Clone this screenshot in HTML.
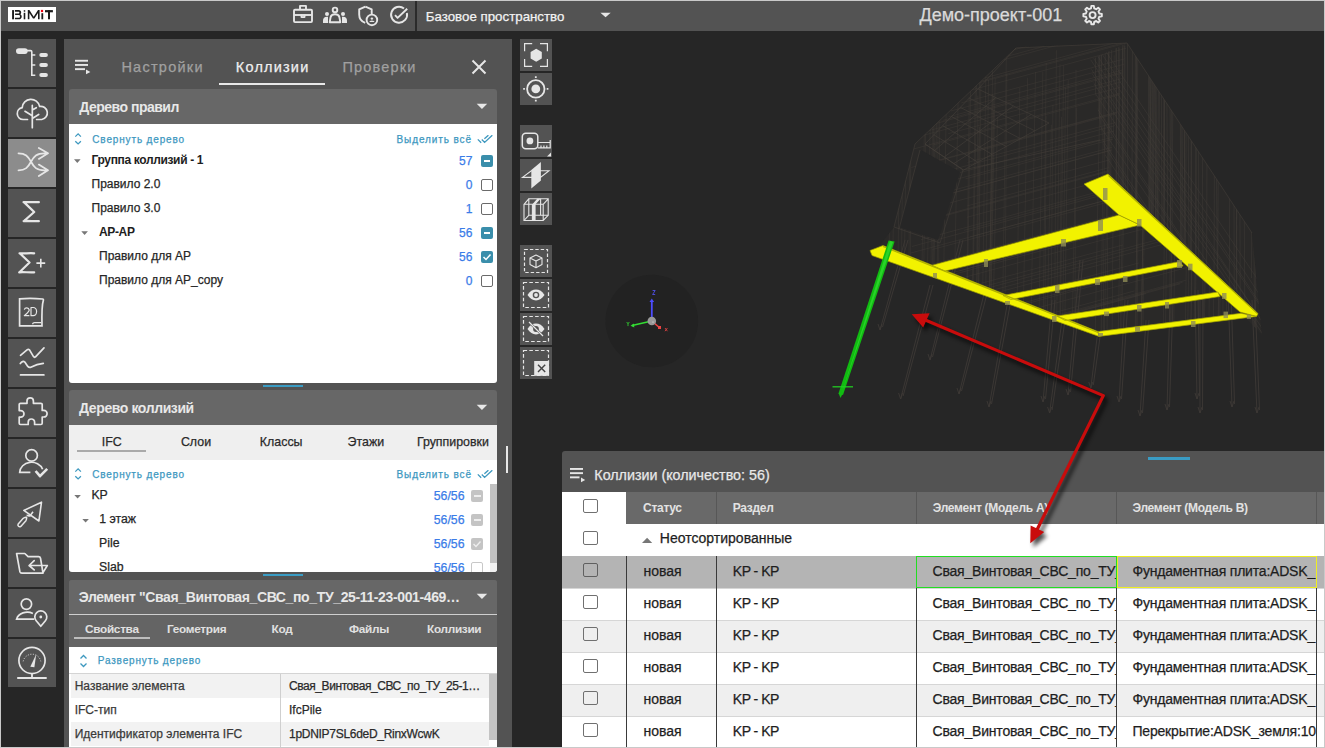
<!DOCTYPE html>
<html><head><meta charset="utf-8">
<style>
*{box-sizing:border-box;margin:0;padding:0}
html,body{width:1325px;height:748px;overflow:hidden;background:#262626;font-family:"Liberation Sans",sans-serif}
body{position:relative}
.a{position:absolute}
.t{position:absolute;white-space:nowrap;line-height:1;-webkit-text-stroke:0.25px currentColor}
.frame{position:absolute;left:0;top:0;width:1325px;height:748px;border:1px solid #c9c9c9;z-index:100;pointer-events:none}
.hdr{left:1px;top:1px;width:1323px;height:30px;background:#535353}
.sb{left:8px;width:48px;height:48px;background:#535353}
.sb.on{background:#8c8c8c}
.sb svg{position:absolute;left:0;top:0}
.panel{left:64px;top:39px;width:448px;height:709px;background:#535353}
.sec{position:absolute;left:69px;width:428px;background:#fff;border-radius:3px;overflow:hidden}
.sech{position:absolute;left:0;top:0;width:100%;height:35px;background:#676767}
.tb{position:absolute;left:520px;width:32px;height:32px;background:#535353}
.cb{position:absolute;width:12px;height:12px;border:1.5px solid #6a6a6a;border-radius:2px;background:#fff}
.cbf{position:absolute;width:12px;height:12px;border-radius:2px;background:#3a8eab}
.num{color:#3a7ce8;font-size:12px}
.blue{color:#3d98bf}
</style></head><body>
<div class="frame"></div>
<!-- HEADER -->
<div class="a hdr"></div>
<svg class="a" style="left:0;top:0" width="1325" height="31" viewBox="0 0 1325 31">
 <rect x="8" y="7" width="48" height="15" fill="#fff"/>
 <g fill="#1c1c1c">
  <rect x="12.1" y="10.1" width="1.9" height="9.2"/>
  <path d="M14.9 10.1h3.9c1.5 0 2.4 1 2.4 2.3c0 0.7-0.3 1.3-0.8 1.8c0.9 0.5 1.3 1.3 1.3 2.2c0 1.6-1.1 2.9-2.8 2.9h-4v-1.6h4c0.7 0 1.1-0.6 1.1-1.3s-0.5-1.3-1.2-1.3h-3.7v-1.6h3.4c0.5 0 0.9-0.4 0.9-1s-0.4-0.8-0.9-0.8h-3.6z"/>
  <rect x="23.7" y="12.8" width="1.6" height="6.5"/>
  <rect x="23.75" y="10.2" width="1.5" height="1.5"/>
  <path d="M27.8 19.3V10.1h1.6l4.3 6.6l4.3-6.6h1.6v9.2h-1.6v-6.4l-3.6 5.6h-1.4l-3.6-5.6v6.4z"/>
  <rect x="41.4" y="13.2" width="1.8" height="6.1"/>
  <rect x="45" y="10.1" width="7.9" height="2.2"/>
  <rect x="48" y="10.1" width="2" height="9.2"/>
 </g>
 <rect x="40.9" y="9.9" width="2.2" height="2.2" fill="#f00010"/>
 <g fill="none" stroke="#e6e6e6" stroke-width="1.9" stroke-linejoin="round">
  <rect x="294" y="9.7" width="18" height="12.4" rx="1"/>
  <path d="M300 9.5V5.9h6v3.6"/>
  <path d="M294 15h18"/>
  <path d="M301.5 14.5v2.6h3v-2.6"/>
  <circle cx="335" cy="9.9" r="2.3"/>
  <path d="M329.7 22.2l0.9-5c0.4-1.9 2-3 4.4-3s4 1.1 4.4 3l0.9 5z"/>
  <path d="M365.4 6.6l-6.2 2.8v5c0 4.2 2.7 7.2 6 8.4"/>
  <path d="M365.4 6.6l6.3 2.8v4.6"/>
  <circle cx="371.9" cy="19.9" r="5.3"/>
  <path d="M404 8.4a8 8 0 1 0 2.9 4.6"/>
  <path d="M395 15.2l2.6 2.7l9.6-9.2"/>
 </g>
 <g fill="#e6e6e6">
  <circle cx="327" cy="13.9" r="2"/><circle cx="343" cy="13.9" r="2"/>
  <path d="M323 23v-2.5c0-2.2 1.4-3.5 3.8-3.7l1.2-0.1v6.3z"/>
  <path d="M347 23v-2.5c0-2.2-1.4-3.5-3.8-3.7l-1.2-0.1v6.3z"/>
  <circle cx="371.9" cy="18.6" r="1.2"/>
  <path d="M369.3 22h5.2a2.6 1.6 0 0 0-5.2 0z"/>
  <path d="M600.4 12.7h10.3l-5.15 4.6z"/>
 </g>
 <rect x="415" y="1" width="2" height="30" fill="#2b2b2b"/>
 <path d="M1091.36 5.88L1093.84 5.88L1094.21 8.39L1096.21 9.22L1098.24 7.71L1099.99 9.46L1098.48 11.49L1099.31 13.49L1101.82 13.86L1101.82 16.34L1099.31 16.71L1098.48 18.71L1099.99 20.74L1098.24 22.49L1096.21 20.98L1094.21 21.81L1093.84 24.32L1091.36 24.32L1090.99 21.81L1088.99 20.98L1086.96 22.49L1085.21 20.74L1086.72 18.71L1085.89 16.71L1083.38 16.34L1083.38 13.86L1085.89 13.49L1086.72 11.49L1085.21 9.46L1086.96 7.71L1088.99 9.22L1090.99 8.39z" fill="none" stroke="#e8e8e8" stroke-width="1.9" stroke-linejoin="round"/><circle cx="1092.6" cy="15.1" r="3" fill="none" stroke="#e8e8e8" stroke-width="1.9"/>
</svg>
<div class="t" style="left:425.8px;top:9.8px;font-size:13.3px;color:#f2f2f2">Базовое пространство</div>
<div class="t" style="left:919.5px;top:5.9px;font-size:18px;color:#dadada">Демо-проект-001</div>
<!-- SIDEBAR -->
<div class="a sb" style="top:39px"><svg width="48" height="48" viewBox="0 0 48 48"><rect x="8" y="9.2" width="11.7" height="5.7" rx="2.85" fill="#e6e6e6"/>
<path d="M19 11.6h3.6a1.2 1.2 0 0 1 1.2 1.2V36.3h3.5M23.8 16h3.5M23.8 26h3.5" stroke="#e6e6e6" stroke-width="1.6" fill="none"/>
<rect x="31.3" y="14" width="8.6" height="4" rx="2" fill="#e6e6e6"/><rect x="31.3" y="24" width="8.6" height="4" rx="2" fill="#e6e6e6"/><rect x="31.3" y="34" width="8.6" height="4" rx="2" fill="#e6e6e6"/></svg></div>
<div class="a sb" style="top:89px"><svg width="48" height="48" viewBox="0 0 48 48"><path d="M19.5 30.5h-4.5a6 6 0 0 1-0.8-11.9a8.8 8.8 0 0 1 17.4-1.2a5.6 5.6 0 0 1 2.2 13.1h-5.2M24.3 16.4v22.3M17 22.3l7.3 4.4M24.3 21l4-2.3M24.3 29.5l6.4-4" stroke="#e6e6e6" stroke-width="1.7" fill="none" stroke-linecap="round"/></svg></div>
<div class="a sb on" style="top:139px"><svg width="48" height="48" viewBox="0 0 48 48"><path d="M10.5 14.3c7 0 9.5 3 12.5 8.5s5.5 8.5 13.5 8.5h3.5M10.5 31.3c7 0 9.5-3 12.5-8.5s5.5-8.5 13.5-8.5h3.5M30.8 9l9.2 5.3l-9.2 5.6M30.8 25.6l9.2 5.7l-9.2 5.7" stroke="#e6e6e6" stroke-width="1.8" fill="none" stroke-linecap="round" stroke-linejoin="round"/></svg></div>
<div class="a sb" style="top:189px"><svg width="48" height="48" viewBox="0 0 48 48"><path d="M15.6 13.1c5 0.3 10 -0.3 15.2 0M16.2 13.3l10 9.7l-10.2 9M15.7 32.1c5 -0.4 10 0.3 15.1 0" stroke="#e6e6e6" stroke-width="2.3" fill="none" stroke-linecap="round" stroke-linejoin="round"/></svg></div>
<div class="a sb" style="top:239px"><svg width="48" height="48" viewBox="0 0 48 48"><path d="M11.5 14.3c4.5 0.3 9.5 -0.3 14.7 0M12 14.5l9.5 9l-9.8 9.5M11.2 33.3c4.5 -0.4 9.8 0.3 15 0" stroke="#e6e6e6" stroke-width="2.2" fill="none" stroke-linecap="round" stroke-linejoin="round"/><path d="M28.4 24.1h8.8M32.8 19.8v8.6" stroke="#e6e6e6" stroke-width="1.6"/></svg></div>
<div class="a sb" style="top:289px"><svg width="48" height="48" viewBox="0 0 48 48"><path d="M11.6 9.8c5-0.5 15-0.7 23 0.2c0.8 0.1 1 0.7 0.7 1.6c-1.3 4-1.6 12-1.3 25.3H11.6z" stroke="#e6e6e6" stroke-width="1.7" fill="none"/><path d="M24.5 35.3c0.3-1 0.8-1.6 2-1.6h6.5" stroke="#e6e6e6" stroke-width="1.3" fill="none"/><path d="M16.3 20.6a2.5 2.4 0 0 1 4.9 0.3c0 1.6-1.4 2.6-4.9 5.8h5.1M23 18.5v8.2h2.2a3.4 4.1 0 0 0 0-8.2z" stroke="#e6e6e6" stroke-width="1.2" fill="none" stroke-linejoin="round"/></svg></div>
<div class="a sb" style="top:339px"><svg width="48" height="48" viewBox="0 0 48 48"><path d="M12.5 16.3l6.5-5.4c1-0.8 1.6-0.8 2.5 0l4 6.7c0.6 0.8 1.3 0.8 2 0.3L36 8.8M12.3 24.6c1.5-2 3-2.8 4.5-1.5l3 4.3c1 1.2 2 1.3 3 0.8c4-2 8-3.3 12.5-3.8M12.5 35.9h23.4" stroke="#e6e6e6" stroke-width="1.7" fill="none" stroke-linecap="round" stroke-linejoin="round"/></svg></div>
<div class="a sb" style="top:389px"><svg width="48" height="48" viewBox="0 0 48 48"><path d="M12.5 14.3h6.5v-2.3a3.2 3.2 0 0 1 6.4 0v2.3h7.5a1.3 1.3 0 0 1 1.3 1.3v5.8h1.6a3.3 3.3 0 0 1 0 6.6h-1.6v6.2a1.3 1.3 0 0 1-1.3 1.3h-6.3v-2.3a3.2 3.2 0 0 0-6.4 0v2.3H12.5a1.3 1.3 0 0 1-1.3-1.3v-6h1.5a3.3 3.3 0 0 0 0-6.6h-1.5v-6a1.3 1.3 0 0 1 1.3-1.3z" stroke="#e6e6e6" stroke-width="1.7" fill="none" stroke-linejoin="round"/></svg></div>
<div class="a sb" style="top:439px"><svg width="48" height="48" viewBox="0 0 48 48"><circle cx="23.6" cy="16.4" r="5.8" stroke="#e6e6e6" stroke-width="1.7" fill="none"/><path d="M34.6 30.2A11.8 10.5 0 0 0 11.7 33.3h10.7" stroke="#e6e6e6" stroke-width="1.7" fill="none"/><path d="M27.6 32l4.4 5.2l7.2-7.3" stroke="#e6e6e6" stroke-width="2.6" fill="none" stroke-linejoin="round"/></svg></div>
<div class="a sb" style="top:489px"><svg width="48" height="48" viewBox="0 0 48 48"><path d="M15.8 21.4l17.7-8.2l-2.6 18.8z M25 22.8l-2.6 3.6c-0.7 0.9-1.3 0.6-1.9 0.3c-0.5-0.3-1.1-0.5-1.9-0.5" stroke="#e6e6e6" stroke-width="1.6" fill="none" stroke-linejoin="round"/><path d="M18.6 28.2c-1.5-0.2-2.8 0.4-3.6 1.3l-4.8 5.5a1.8 1.8 0 0 0 2.6 2.4l5.1-5.6c0.7-0.9 0.9-2.1 0.7-3.6z" stroke="#e6e6e6" stroke-width="1.5" fill="none" stroke-linejoin="round"/></svg></div>
<div class="a sb" style="top:539px"><svg width="48" height="48" viewBox="0 0 48 48"><path d="M8.6 14.5h8.2l3.3 3.1h10.4c1.2 0 1.8 0.7 2 1.6l2.5 14.9H13.8c-1 0-1.6-0.5-1.9-1.4z M34.7 34.1l4.6-7.6h-18.2M26.2 21.6l-5.1 4.9l5.1 4.4" stroke="#e6e6e6" stroke-width="1.7" fill="none" stroke-linejoin="round" stroke-linecap="round"/></svg></div>
<div class="a sb" style="top:589px"><svg width="48" height="48" viewBox="0 0 48 48"><circle cx="18.4" cy="15.1" r="5.2" stroke="#e6e6e6" stroke-width="1.7" fill="none"/><path d="M24.9 24.4A11 9 0 0 0 8.6 30.2h17.6" stroke="#e6e6e6" stroke-width="1.7" fill="none"/><path d="M32.8 37.3l-4.6-5.5a6 6 0 1 1 9.2 0z" stroke="#e6e6e6" stroke-width="1.7" fill="none" stroke-linejoin="round"/><circle cx="32.8" cy="28" r="1.4" fill="#e6e6e6"/></svg></div>
<div class="a sb" style="top:639px"><svg width="48" height="48" viewBox="0 0 48 48"><circle cx="24" cy="21.5" r="13.1" stroke="#e6e6e6" stroke-width="1.7" fill="none"/><path d="M15.2 22.3a9 9 0 0 1 17.6 0" stroke="#e6e6e6" stroke-width="1" stroke-dasharray="1 1.6" fill="none"/><path d="M22.3 27.7l5.9-12.4l-1.8 12.9z" fill="#e6e6e6"/><path d="M24 34.5v4.5M9.2 39h29.5" stroke="#e6e6e6" stroke-width="1.8"/></svg></div>
<!-- 3D -->
<svg class="a" style="left:512px;top:31px" width="813" height="717" viewBox="512 31 813 717">
<defs>
<filter id="sh" x="-20%" y="-20%" width="140%" height="140%"><feGaussianBlur stdDeviation="2.2"/></filter>
<clipPath id="rf"><polygon points="1127,43 1252,233 1262,335 1240,312 1140,225 1108,174 1090,60"/></clipPath>
<clipPath id="md"><polygon points="1017,47 1127,43 1108,174 1256,316 1099,336 872,255 894,227 915,144"/></clipPath>
<clipPath id="cl"><polygon points="1017,47 915,145 966,170 1048,85"/></clipPath>
</defs>
<circle cx="651.8" cy="321" r="46.3" fill="#222222"/>
<path d="M651.8 321V301" stroke="#4d4dff" stroke-width="1.8"/><path d="M649.5 302l2.3-3.5l2.3 3.5z" fill="#4d4dff"/><path d="M651.8 321L632 325.5" stroke="#33dd33" stroke-width="1.6"/><path d="M634 323.5l-3.5 2.3l3.8 1.8z" fill="#33dd33"/><path d="M651.8 321l7 6" stroke="#ee4444" stroke-width="1.5"/><rect x="658" y="326" width="3" height="3" fill="#ee4444"/><circle cx="651.8" cy="321" r="4.3" fill="#999"/><circle cx="653" cy="322" r="0.6" fill="#eee"/><path d="M652.6 290.5h2.6l-2.6 4h2.6" stroke="#5555ff" stroke-width="0.8" fill="none"/><path d="M626.7 322l1.3 1.8l1.3-1.8M628 323.8v2.3" stroke="#33dd33" stroke-width="0.8" fill="none"/><path d="M665 328l2.4 3.2M667.4 328l-2.4 3.2" stroke="#ee4444" stroke-width="0.8" fill="none"/>
<polygon points="1127,43 1252,233 1262,335 1240,312 1140,225 1108,174 1090,60" fill="#2a2928"/>
<polygon points="1017,47 1127,43 1108,174 1256,316 1099,336 872,255 894,227 915,144" fill="#2a2928"/>
<g clip-path="url(#rf)"><path d="M1148.4 41.5L1149.0 265.8M1183.4 43.7L1181.7 300.6M1101.2 44.3L1099.5 267.3M1165.0 48.3L1163.5 277.9M1198.5 49.5L1198.8 291.7M1256.1 40.5L1257.5 283.2M1118.8 41.2L1118.0 325.3M1124.8 45.8L1125.4 289.8M1185.4 40.6L1183.6 276.5M1207.3 44.3L1206.5 306.8M1169.8 43.0L1171.0 315.9M1135.3 45.7L1135.4 330.0M1215.4 42.9L1217.3 269.4M1164.0 47.6L1162.6 299.1M1101.5 46.7L1102.5 305.8M1239.5 43.1L1240.2 307.5M1190.7 44.6L1192.0 335.6M1173.2 46.6L1171.5 316.1M1201.8 49.9L1203.1 282.8M1158.7 46.7L1156.7 296.9M1122.7 41.2L1121.0 321.5M1116.3 42.5L1115.9 329.7M1108.3 44.5L1108.5 330.7M1230.2 48.6L1229.3 293.2M1154.2 48.8L1156.0 272.1M1124.1 42.3L1123.0 298.8M1192.2 42.6L1190.2 293.5M1155.9 45.7L1157.7 315.2M1180.1 46.2L1180.8 264.3M1243.4 47.8L1244.9 323.8M1159.7 44.0L1158.2 310.7M1105.3 40.7L1104.1 273.0M1151.1 40.5L1149.1 272.1M1111.7 43.6L1109.8 329.9M1196.3 41.5L1195.3 287.8M1155.1 41.2L1156.5 339.4M1171.9 44.8L1170.2 268.2M1151.5 42.6L1152.9 272.9M1098.8 49.5L1098.9 271.7M1184.6 40.3L1184.7 338.3M1237.4 47.0L1236.5 289.3M1122.6 47.7L1122.7 322.3M1149.4 42.2L1150.6 338.8M1235.7 48.1L1237.0 319.2M1132.4 45.2L1131.8 262.3M1099.6 42.8L1098.6 315.4M1252.8 44.5L1254.6 339.0M1252.6 43.6L1251.5 278.1M1127.5 42.0L1128.0 332.0M1233.7 44.8L1234.3 324.0M1109.0 46.6L1110.6 322.6M1218.8 44.8L1217.5 323.1M1149.9 48.0L1151.8 291.7M1161.2 49.5L1162.1 273.6M1116.0 41.5L1117.6 324.5M1119.1 48.3L1121.0 312.6M1152.8 45.5L1151.3 261.1M1255.2 46.5L1255.3 334.7M1166.6 48.7L1167.9 276.9M1136.6 42.9L1135.5 306.9M1137.8 44.2L1136.3 332.8M1153.4 44.6L1153.7 332.3M1164.4 49.2L1164.4 302.5M1181.4 40.2L1181.1 274.6M1095.6 48.0L1094.3 297.9M1214.7 45.6L1214.0 301.5M1186.6 47.8L1185.1 304.8M1136.0 42.8L1137.1 300.6M1187.7 47.6L1189.3 295.5M1196.1 45.1L1196.1 315.4M1080 12.7L1270 298.1M1080 20.4L1270 310.7M1080 29.2L1270 318.7M1080 38.2L1270 320.3M1080 43.4L1270 333.7M1080 52.5L1270 333.2M1080 55.7L1270 340.0M1080 62.9L1270 344.8M1080 70.4L1270 357.5M1080 82.2L1270 372.0M1080 85.9L1270 373.5M1080 96.5L1270 377.2M1080 105.3L1270 395.9M1080 108.8L1270 399.2M1080 117.4L1270 402.2M1080 128.4L1270 417.4M1080 131.0L1270 415.1M1080 140.6L1270 423.7M1080 146.2L1270 429.0M1080 156.8L1270 436.1M1080 163.3L1270 447.6M1080 167.6L1270 450.6M1080 178.7L1270 463.9M1080 182.9L1270 473.7M1080 194.7L1270 485.4M1080 198.1L1270 480.3M1080 205.2L1270 493.6M1080 214.1L1270 494.7M1080 222.5L1270 512.5M1080 232.4L1270 514.5M1080 235.9L1270 525.9M1080 245.9L1270 533.3M1080 250.5L1270 530.2M1080 261.6L1270 545.7M1080 265.4L1270 555.7M1080 276.3L1270 564.9M1080 280.5L1270 569.8M1080 287.9L1270 577.3M1080 297.7L1270 580.8M1080 305.8L1270 595.9" stroke="#45403b" stroke-width="1" fill="none" opacity="0.42"/></g>
<g clip-path="url(#md)"><path d="M981.1 60.3L978.2 340M971.1 58.8L966.7 340M907.1 66.1L903.4 340M993.7 110.8L989.9 340M1060.0 64.2L1056.4 340M896.2 70.0L891.2 340M1139.2 94.1L1135.0 340M1051.4 124.8L1046.8 340M1168.4 84.6L1165.4 340M1173.8 81.4L1170.8 340M1123.8 128.6L1120.2 340M1173.0 106.5L1170.5 340M1027.6 77.8L1022.8 340M934.1 55.7L932.1 340M976.9 63.1L972.2 340M1176.0 119.6L1173.7 340M985.9 69.4L982.0 340M1046.2 62.6L1043.0 340M979.5 126.9L978.4 340M1076.0 69.6L1074.9 340M995.2 78.5L990.3 340M1019.8 88.0L1016.8 340M958.3 90.4L953.4 340M979.8 57.2L976.4 340M904.2 51.8L900.4 340M969.2 96.8L966.3 340M1145.2 102.6L1143.0 340M1188.9 81.2L1185.2 340M1224.8 62.0L1222.7 340M1108.7 53.5L1107.0 340M1193.3 100.2L1191.2 340M1166.2 61.1L1163.2 340M1061.5 116.8L1059.7 340M1171.0 96.7L1169.6 340M1122.2 105.5L1118.1 340M900.6 60.6L897.0 340M925.7 116.9L922.9 340M1103.4 100.1L1101.2 340M1056.4 50.3L1054.6 340M1144.4 90.2L1141.6 340M1114.2 55.3L1112.1 340M975.7 56.0L971.8 340M1138.0 66.4L1135.9 340M1221.7 89.5L1218.3 340M1052.9 104.7L1050.9 340M1099.8 101.4L1095.1 340M940.1 70.3L938.1 340M993.5 95.4L988.6 340M910.6 71.5L908.3 340M1125.3 104.1L1121.5 340M1065.6 87.2L1062.5 340M930.3 121.5L926.1 340M1222.6 124.9L1217.6 340M1046.1 115.6L1044.9 340M1042.8 71.5L1038.7 340M1211.5 66.9L1208.8 340M938.2 91.9L937.0 340M935.1 115.6L932.1 340M1191.5 106.3L1187.5 340M1195.2 88.9L1190.3 340M891.2 89.3L888.0 340M992.7 61.3L989.0 340M997.5 117.2L992.5 340M1145.2 117.1L1140.7 340M1205.0 107.0L1203.6 340M988.5 79.8L985.1 340M1229.6 97.1L1226.0 340M1035.5 72.0L1030.7 340M924.6 116.8L920.7 340M1208.1 69.9L1204.2 340M1063.7 65.2L1060.2 340M1215.1 120.7L1213.3 340M1104.5 123.1L1103.3 340M1076.7 107.6L1071.9 340M1139.0 86.1L1137.0 340M1109.1 72.9L1104.3 340M1205.1 60.2L1202.0 340M1006.8 73.8L1004.8 340M1221.9 70.8L1219.6 340M992.3 94.6L988.9 340M946.9 62.9L942.7 340M1198.0 89.8L1193.9 340M1198.1 129.7L1194.9 340M937.5 65.4L932.8 340M1006.3 57.3L1002.2 340M977.8 95.6L976.4 340M1144.9 83.0L1141.5 340M1068.2 80.1L1064.6 340M911.1 72.2L910.0 340M932.8 90.3L930.3 340M923.0 74.3L1141.7 15.3M934.0 76.0L1155.7 16.2M960.9 84.4L1189.8 22.6M911.9 84.5L1176.8 13.0M938.4 93.7L1167.0 32.0M933.5 94.0L1194.1 23.6M961.3 102.9L1197.8 39.1M916.5 104.8L1132.4 46.6M950.9 111.0L1195.3 45.0M948.8 116.8L1181.2 54.1M943.1 120.3L1123.2 71.7M924.0 126.7L1193.6 53.9M928.2 130.8L1130.2 76.3M948.2 133.7L1175.9 72.2M914.2 137.8L1162.0 70.9M933.3 144.9L1137.9 89.7M910.6 149.8L1144.1 86.8M967.5 153.9L1171.6 98.8M938.5 160.8L1138.8 106.7M967.6 162.4L1176.4 106.1M911.3 167.5L1159.9 100.4M935.2 174.2L1140.6 118.7M965.5 178.9L1138.1 132.3M930.3 180.6L1153.6 120.3M921.9 188.6L1183.8 117.9M940.3 193.7L1136.4 140.7M928.7 199.6L1185.6 130.3M923.3 200.8L1180.8 131.2M967.1 205.9L1159.7 153.9M923.4 210.1L1153.4 148.0M966.9 217.3L1131.7 172.8M922.8 220.8L1197.9 146.5M913.1 224.3L1124.8 167.2M963.9 230.4L1190.7 169.1M969.9 236.9L1194.5 176.2M921.1 239.6L1194.9 165.7M911.9 246.5L1173.2 176.0M932.4 249.5L1146.5 191.7M910.2 253.2L1142.4 190.5M967.3 259.0L1129.9 215.1M922.4 266.8L1148.5 205.8M959.3 270.9L1154.6 218.2M938.4 271.8L1149.8 214.8M921.6 281.0L1149.1 219.6M911.8 285.7L1152.9 220.6M956.0 290.1L1123.3 244.9M913.8 291.0L1193.6 215.4M954.8 296.9L1191.9 232.9M926.3 302.1L1196.6 229.1M925.7 308.3L1177.3 240.4M926.5 311.6L1120.3 259.3M965.0 318.6L1170.7 263.0M911.5 324.3L1138.7 263.0M967.4 326.8L1196.3 265.0M925.1 331.1L1154.4 269.2M965.7 336.5L1134.6 290.9M954.3 342.8L1185.8 280.3M946.4 347.5L1146.2 293.5M931.7 350.0L1182.6 282.3M921.8 353.6L1180.2 283.8" stroke="#45403b" stroke-width="1" fill="none" opacity="0.38"/></g>
<polygon points="921,150 960,172 938,240 899,227" fill="#262626"/>
<path d="M925.0 144.0L963.5 170.0M933.8 134.8L977.8 162.2M942.7 125.7L992.0 154.3M951.5 116.5L1006.2 146.5M960.3 107.3L1020.5 138.7M969.2 98.2L1034.8 130.8M978.0 89.0L1049.0 123.0M925.0 144.0L978.0 89.0M934.6 150.5L995.8 97.5M944.2 157.0L1013.5 106.0M953.9 163.5L1031.2 114.5M963.5 170.0L1049.0 123.0" stroke="#45403b" stroke-width="1" fill="none" opacity="0.6"/>
<path d="M1016 48L1127 43L1252 233M1016 48L915 144L894 227L940 243M925 144L963 170L940 243M920 150L899 229M978 89L1016 48M963 170L1100 140" stroke="#45403b" stroke-width="1" fill="none" opacity="0.55"/>
<path d="M930 285L900.6 399M933 285L903.1 396M898.6 393l2 6l2-6M985 290L959 394M988 290L961.5 391M957 388l2 6l2-6M1008 300L989 407M1011 300L991.5 404M987 401l2 6l2-6M1062 320L1049.6 413M1065 320L1052.1 410M1047.6 407l2 6l2-6M1052 300L1043 402M1055 300L1045.5 399M1041 396l2 6l2-6M1098 330L1090.8 388M1101 330L1093.3 385M1088.8 382l2 6l2-6M1125 300L1119 402M1128 300L1121.5 399M1117 396l2 6l2-6M1146 320L1140 416M1149 320L1142.5 413M1138 410l2 6l2-6M1170 300L1167 410M1173 300L1169.5 407M1165 404l2 6l2-6M1200 300L1200 413M1203 300L1202.5 410M1198 407l2 6l2-6M1228 290L1232 407M1231 290L1234.5 404M1230 401l2 6l2-6M1252 300L1257 413M1255 300L1259.5 410M1255 407l2 6l2-6M1195 290L1197 399M1198 290L1199.5 396M1195 393l2 6l2-6M1080 260L1068 395M1083 260L1070.5 392M1066 389l2 6l2-6M905 240L880 330M908 240L882.5 327M878 324l2 6l2-6M960 240L930 360M963 240L932.5 357M928 354l2 6l2-6" stroke="#3d3935" stroke-width="1" fill="none" opacity="0.9"/>
<g stroke="#9c9c00" stroke-width="0.7" stroke-linejoin="round"><polygon points="870,250.5 883,245.5 1098,331.6 1099,336.4 872,255.5" fill="#f2f200"/><polygon points="932,265.3 1119,215 1140,225 945,271" fill="#f2f200"/><polygon points="1084,184 1108,174 1258,314 1256.4,316.4 1240,312 1140,225 1119,215" fill="#f2f200"/><polygon points="1003,295.5 1180,261.5 1183,266 1011,299.5" fill="#f2f200"/><polygon points="1057,316 1218,292 1220,296.5 1065,320.5" fill="#f2f200"/><polygon points="1098,331.6 1241,313.3 1256.4,316.4 1099,336.4" fill="#f2f200"/></g>
<path d="M1108.5 175.5L1258 314M883 246.5L1098 332.5" stroke="#b0b000" stroke-width="1.2" fill="none"/>
<rect x="1103" y="188" width="4.5" height="12" fill="#8f8c55" opacity="0.8"/><rect x="1137" y="219" width="4.5" height="7.5" fill="#8f8c55" opacity="0.8"/><rect x="1098" y="220" width="5" height="11" fill="#8f8c55" opacity="0.8"/><rect x="1061" y="239" width="5" height="7.5" fill="#8f8c55" opacity="0.8"/><rect x="984" y="259" width="4" height="8" fill="#8f8c55" opacity="0.8"/><rect x="933" y="273" width="4" height="5" fill="#8f8c55" opacity="0.8"/><rect x="1188" y="263.7" width="4.5" height="6.5" fill="#8f8c55" opacity="0.8"/><rect x="1177" y="260" width="5" height="8" fill="#8f8c55" opacity="0.8"/><rect x="1123" y="276" width="4.5" height="6" fill="#8f8c55" opacity="0.8"/><rect x="1095" y="279" width="5" height="6" fill="#8f8c55" opacity="0.8"/><rect x="1055" y="285" width="4.5" height="8" fill="#8f8c55" opacity="0.8"/><rect x="1005" y="301" width="5" height="4" fill="#8f8c55" opacity="0.8"/><rect x="1222" y="293" width="4.5" height="6" fill="#8f8c55" opacity="0.8"/><rect x="1165" y="302" width="4" height="6.5" fill="#8f8c55" opacity="0.8"/><rect x="1137" y="305" width="4.5" height="6.5" fill="#8f8c55" opacity="0.8"/><rect x="1104" y="311.6" width="5" height="4.5" fill="#8f8c55" opacity="0.8"/><rect x="1052" y="316" width="4.5" height="6" fill="#8f8c55" opacity="0.8"/><rect x="1191" y="321" width="4.5" height="6" fill="#8f8c55" opacity="0.8"/><rect x="1135" y="327" width="5" height="4.7" fill="#8f8c55" opacity="0.8"/><rect x="1098" y="333" width="5" height="3" fill="#8f8c55" opacity="0.8"/><rect x="1223.5" y="311.6" width="4.5" height="6.5" fill="#8f8c55" opacity="0.8"/><rect x="1246.8" y="314.7" width="4.2" height="4.3" fill="#8f8c55" opacity="0.8"/>
<path d="M888.6 240.5L894.6 241.6L843 395L838.5 393.5z" fill="#11bb11"/><path d="M890 241L893 242L841.5 394z" fill="#33dd33" opacity="0.7"/><path d="M832.5 386.8h20.5" stroke="#22cc22" stroke-width="1.3"/><path d="M838.5 393l2 5l2.5-5" fill="#11bb11"/>
</svg>
<!-- VIEW -->
<div class="tb" style="top:39px"><svg width="32" height="32" viewBox="0 0 32 32"><path d="M4.6 12.2V4.6h7.6M20 4.6h7.4v7.6M27.4 20v7.4H20M12.2 27.4H4.6V20" stroke="#e6e6e6" stroke-width="1.2" fill="none"/><path d="M16.2 9.8l5.6 3.2v6.5l-5.6 3.2l-5.6-3.2v-6.5z" fill="#e6e6e6"/></svg></div>
<div class="tb" style="top:73px"><svg width="32" height="32" viewBox="0 0 32 32"><circle cx="15.8" cy="15.9" r="8.7" stroke="#e6e6e6" stroke-width="1.8" fill="none"/><circle cx="15.8" cy="15.9" r="4.4" fill="#e6e6e6"/><path d="M15.8 5v-1.7M15.8 26.8v1.7M4.9 15.9H3.2M26.7 15.9h1.7" stroke="#e6e6e6" stroke-width="1.8"/></svg></div>
<div class="tb" style="top:125px"><svg width="32" height="32" viewBox="0 0 32 32"><rect x="2.3" y="8.3" width="15.5" height="15.5" rx="3.5" stroke="#e6e6e6" stroke-width="1.5" fill="none"/><circle cx="9.9" cy="15.9" r="3.4" fill="#e6e6e6"/><path d="M17.8 17.5h12.4v5.4H17.8M21 22.9v-2.5M23.9 22.9v-2.5M26.8 22.9v-2.5M30.2 17.5v-2.5" stroke="#e6e6e6" stroke-width="1.2" fill="none"/><path d="M31 27.5v4h-4z" fill="#e6e6e6"/></svg></div>
<div class="tb" style="top:159px"><svg width="32" height="32" viewBox="0 0 32 32"><path d="M2.5 18.4l8.8-6.7h17.7l-8.6 6.7z" stroke="#e6e6e6" stroke-width="1.1" fill="none"/><path d="M11.3 11l9.6-8.1v18.7l-9.6 7.9z" fill="#e6e6e6"/></svg></div>
<div class="tb" style="top:193px"><svg width="32" height="32" viewBox="0 0 32 32"><path d="M4 11.3l4.8-5.5h19.4v16.5l-5 5.2H4z M4 11.3h19.2v16.2M23.2 11.3l5-5.5" stroke="#e6e6e6" stroke-width="1.1" fill="none"/><path d="M12.4 11.3l4.8-5.5h3.4l-5 5.5v16.2h-3.2z" fill="#e6e6e6"/><path d="M4 27.5l4.8-5.2h19.4M8.8 5.8v16.5M12.4 11.3v16.2M20.6 5.8v16.5" stroke="#e6e6e6" stroke-width="1.1" fill="none"/></svg></div>
<div class="tb" style="top:245px"><svg width="32" height="32" viewBox="0 0 32 32"><rect x="4.5" y="4.5" width="23" height="23" stroke="#e6e6e6" stroke-width="1.2" stroke-dasharray="3.4 2" fill="none"/><path d="M16 10l6 3v6.6l-6 3.2l-6-3.2V13z M10 13l6 3l6-3M16 16v6.8" stroke="#e6e6e6" stroke-width="1.1" fill="none" stroke-linejoin="round"/></svg></div>
<div class="tb" style="top:279px"><svg width="32" height="32" viewBox="0 0 32 32"><rect x="3.5" y="3.5" width="25" height="25" stroke="#e6e6e6" stroke-width="1.2" stroke-dasharray="3.6 2.2" fill="none"/><path d="M7.5 16c2.3-3.6 5.2-5.4 8.5-5.4s6.2 1.8 8.5 5.4c-2.3 3.6-5.2 5.4-8.5 5.4s-6.2-1.8-8.5-5.4z" fill="#e6e6e6"/><circle cx="16" cy="16" r="3.3" fill="#535353"/><circle cx="16" cy="16" r="1.9" fill="#e6e6e6"/></svg></div>
<div class="tb" style="top:313px"><svg width="32" height="32" viewBox="0 0 32 32"><rect x="3.5" y="3.5" width="25" height="25" stroke="#e6e6e6" stroke-width="1.2" stroke-dasharray="3.6 2.2" fill="none"/><path d="M7.5 16c2.3-3.6 5.2-5.4 8.5-5.4s6.2 1.8 8.5 5.4c-2.3 3.6-5.2 5.4-8.5 5.4s-6.2-1.8-8.5-5.4z" fill="#e6e6e6"/><circle cx="16" cy="16" r="2.9" fill="#535353"/><path d="M9 9l14 14" stroke="#535353" stroke-width="2.4"/><path d="M9 9l14 14" stroke="#e6e6e6" stroke-width="1.2"/></svg></div>
<div class="tb" style="top:347px"><svg width="32" height="32" viewBox="0 0 32 32"><rect x="3.5" y="3.5" width="25" height="25" stroke="#e6e6e6" stroke-width="1.2" stroke-dasharray="3.6 2.2" fill="none"/><rect x="14.2" y="14" width="14.8" height="14.8" fill="#e6e6e6"/><path d="M18 17.8l7.2 7.2M25.2 17.8l-7.2 7.2" stroke="#444" stroke-width="1.4"/></svg></div>
<!-- TABLE -->
<div class="a" style="left:562px;top:451px;width:763px;height:297px;background:#535353;border-radius:3px 0 0 0"></div>
<svg class="a" style="left:568px;top:466px" width="20" height="18"><g fill="#e6e6e6"><rect x="2" y="2" width="13" height="1.9"/><rect x="2" y="6.2" width="13" height="1.9"/><rect x="2" y="10.4" width="9.5" height="1.9"/><path d="M13 11.6l4.2 2.3l-4.2 2.3z"/></g></svg>
<div class="t" style="left:594.3px;top:467.50px;font-size:14.3px;color:#e8e8e8;">Коллизии (количество: 56)</div>
<div class="a" style="left:1148px;top:457px;width:42px;height:3px;background:#3a9cc4"></div>
<div class="a" style="left:562px;top:492px;width:64px;height:32px;background:#fff"></div>
<div class="a" style="left:626px;top:492px;width:698px;height:32px;background:#696969"></div>
<div class="a" style="left:716px;top:492px;width:1px;height:32px;background:#575757"></div>
<div class="a" style="left:916px;top:492px;width:1px;height:32px;background:#575757"></div>
<div class="a" style="left:1116px;top:492px;width:1px;height:32px;background:#575757"></div>
<div class="a" style="left:1316px;top:492px;width:1px;height:32px;background:#575757"></div>
<div class="t" style="left:643.1px;top:502.14px;font-size:12px;color:#e2e2e2;font-weight:700;-webkit-text-stroke:0;letter-spacing:-0.3px;">Статус</div>
<div class="t" style="left:732.8px;top:502.14px;font-size:12px;color:#e2e2e2;font-weight:700;-webkit-text-stroke:0;letter-spacing:-0.3px;">Раздел</div>
<div class="t" style="left:932.7px;top:502.14px;font-size:12px;color:#e2e2e2;font-weight:700;-webkit-text-stroke:0;letter-spacing:-0.3px;">Элемент (Модель A)</div>
<div class="t" style="left:1132.5px;top:502.14px;font-size:12px;color:#e2e2e2;font-weight:700;-webkit-text-stroke:0;letter-spacing:-0.3px;">Элемент (Модель B)</div>
<div class="a" style="left:583px;top:498.8px;width:14.5px;height:14.5px;border:1.6px solid #707070;border-radius:2px"></div>
<div class="a" style="left:562px;top:524px;width:762px;height:32px;background:#fff"></div>
<div class="a" style="left:583px;top:530.6px;width:14.5px;height:14.5px;border:1.6px solid #707070;border-radius:2px"></div>
<svg class="a" style="left:641px;top:537px" width="13" height="7"><path d="M1 6h10.2l-5.1-5.2z" fill="#777"/></svg>
<div class="t" style="left:659.8px;top:530.95px;font-size:14px;color:#1e1e1e;">Неотсортированные</div>
<div class="a" style="left:562px;top:556px;width:762px;height:32px;background:#b4b4b4"></div>
<div class="a" style="left:626px;top:556px;width:1px;height:32px;background:#3a3a3a"></div>
<div class="a" style="left:716px;top:556px;width:1px;height:32px;background:#3a3a3a"></div>
<div class="a" style="left:916px;top:556px;width:1px;height:32px;background:#3a3a3a"></div>
<div class="a" style="left:1116px;top:556px;width:1px;height:32px;background:#3a3a3a"></div>
<div class="a" style="left:1316px;top:556px;width:1px;height:32px;background:#3a3a3a"></div>
<div class="a" style="left:583px;top:562.6px;width:14.5px;height:14.5px;border:1.6px solid #606060;border-radius:2px"></div>
<div class="t" style="left:643.5px;top:563.85px;font-size:14px;color:#1e1e1e;">новая</div>
<div class="t" style="left:732.8px;top:563.85px;font-size:14px;color:#1e1e1e;letter-spacing:-0.5px;">KP - KP</div>
<div class="a" style="left:917px;top:556px;width:199px;height:32px;overflow:hidden"><div class="t" style="left:15.5px;top:7.85px;font-size:14px;color:#1e1e1e;letter-spacing:-0.2px;">Свая_Винтовая_СВС_по_ТУ_</div>
</div>
<div class="a" style="left:1117px;top:556px;width:199px;height:32px;overflow:hidden"><div class="t" style="left:15.5px;top:7.85px;font-size:14px;color:#1e1e1e;letter-spacing:-0.2px;">Фундаментная плита:ADSK_</div>
</div>
<div class="a" style="left:562px;top:588px;width:762px;height:32px;background:#fff"></div>
<div class="a" style="left:562px;top:587.5px;width:762px;height:1px;background:#d6d6d6"></div>
<div class="a" style="left:626px;top:588px;width:1px;height:32px;background:#3a3a3a"></div>
<div class="a" style="left:716px;top:588px;width:1px;height:32px;background:#3a3a3a"></div>
<div class="a" style="left:916px;top:588px;width:1px;height:32px;background:#3a3a3a"></div>
<div class="a" style="left:1116px;top:588px;width:1px;height:32px;background:#3a3a3a"></div>
<div class="a" style="left:1316px;top:588px;width:1px;height:32px;background:#3a3a3a"></div>
<div class="a" style="left:583px;top:594.6px;width:14.5px;height:14.5px;border:1.6px solid #707070;border-radius:2px"></div>
<div class="t" style="left:643.5px;top:595.85px;font-size:14px;color:#1e1e1e;">новая</div>
<div class="t" style="left:732.8px;top:595.85px;font-size:14px;color:#1e1e1e;letter-spacing:-0.5px;">KP - KP</div>
<div class="a" style="left:917px;top:588px;width:199px;height:32px;overflow:hidden"><div class="t" style="left:15.5px;top:7.85px;font-size:14px;color:#1e1e1e;letter-spacing:-0.2px;">Свая_Винтовая_СВС_по_ТУ_</div>
</div>
<div class="a" style="left:1117px;top:588px;width:199px;height:32px;overflow:hidden"><div class="t" style="left:15.5px;top:7.85px;font-size:14px;color:#1e1e1e;letter-spacing:-0.2px;">Фундаментная плита:ADSK_</div>
</div>
<div class="a" style="left:562px;top:620px;width:762px;height:32px;background:#efefef"></div>
<div class="a" style="left:562px;top:619.5px;width:762px;height:1px;background:#d6d6d6"></div>
<div class="a" style="left:626px;top:620px;width:1px;height:32px;background:#3a3a3a"></div>
<div class="a" style="left:716px;top:620px;width:1px;height:32px;background:#3a3a3a"></div>
<div class="a" style="left:916px;top:620px;width:1px;height:32px;background:#3a3a3a"></div>
<div class="a" style="left:1116px;top:620px;width:1px;height:32px;background:#3a3a3a"></div>
<div class="a" style="left:1316px;top:620px;width:1px;height:32px;background:#3a3a3a"></div>
<div class="a" style="left:583px;top:626.6px;width:14.5px;height:14.5px;border:1.6px solid #707070;border-radius:2px"></div>
<div class="t" style="left:643.5px;top:627.85px;font-size:14px;color:#1e1e1e;">новая</div>
<div class="t" style="left:732.8px;top:627.85px;font-size:14px;color:#1e1e1e;letter-spacing:-0.5px;">KP - KP</div>
<div class="a" style="left:917px;top:620px;width:199px;height:32px;overflow:hidden"><div class="t" style="left:15.5px;top:7.85px;font-size:14px;color:#1e1e1e;letter-spacing:-0.2px;">Свая_Винтовая_СВС_по_ТУ_</div>
</div>
<div class="a" style="left:1117px;top:620px;width:199px;height:32px;overflow:hidden"><div class="t" style="left:15.5px;top:7.85px;font-size:14px;color:#1e1e1e;letter-spacing:-0.2px;">Фундаментная плита:ADSK_</div>
</div>
<div class="a" style="left:562px;top:652px;width:762px;height:32px;background:#fff"></div>
<div class="a" style="left:562px;top:651.5px;width:762px;height:1px;background:#d6d6d6"></div>
<div class="a" style="left:626px;top:652px;width:1px;height:32px;background:#3a3a3a"></div>
<div class="a" style="left:716px;top:652px;width:1px;height:32px;background:#3a3a3a"></div>
<div class="a" style="left:916px;top:652px;width:1px;height:32px;background:#3a3a3a"></div>
<div class="a" style="left:1116px;top:652px;width:1px;height:32px;background:#3a3a3a"></div>
<div class="a" style="left:1316px;top:652px;width:1px;height:32px;background:#3a3a3a"></div>
<div class="a" style="left:583px;top:658.6px;width:14.5px;height:14.5px;border:1.6px solid #707070;border-radius:2px"></div>
<div class="t" style="left:643.5px;top:659.85px;font-size:14px;color:#1e1e1e;">новая</div>
<div class="t" style="left:732.8px;top:659.85px;font-size:14px;color:#1e1e1e;letter-spacing:-0.5px;">KP - KP</div>
<div class="a" style="left:917px;top:652px;width:199px;height:32px;overflow:hidden"><div class="t" style="left:15.5px;top:7.85px;font-size:14px;color:#1e1e1e;letter-spacing:-0.2px;">Свая_Винтовая_СВС_по_ТУ_</div>
</div>
<div class="a" style="left:1117px;top:652px;width:199px;height:32px;overflow:hidden"><div class="t" style="left:15.5px;top:7.85px;font-size:14px;color:#1e1e1e;letter-spacing:-0.2px;">Фундаментная плита:ADSK_</div>
</div>
<div class="a" style="left:562px;top:684px;width:762px;height:32px;background:#efefef"></div>
<div class="a" style="left:562px;top:683.5px;width:762px;height:1px;background:#d6d6d6"></div>
<div class="a" style="left:626px;top:684px;width:1px;height:32px;background:#3a3a3a"></div>
<div class="a" style="left:716px;top:684px;width:1px;height:32px;background:#3a3a3a"></div>
<div class="a" style="left:916px;top:684px;width:1px;height:32px;background:#3a3a3a"></div>
<div class="a" style="left:1116px;top:684px;width:1px;height:32px;background:#3a3a3a"></div>
<div class="a" style="left:1316px;top:684px;width:1px;height:32px;background:#3a3a3a"></div>
<div class="a" style="left:583px;top:690.6px;width:14.5px;height:14.5px;border:1.6px solid #707070;border-radius:2px"></div>
<div class="t" style="left:643.5px;top:691.85px;font-size:14px;color:#1e1e1e;">новая</div>
<div class="t" style="left:732.8px;top:691.85px;font-size:14px;color:#1e1e1e;letter-spacing:-0.5px;">KP - KP</div>
<div class="a" style="left:917px;top:684px;width:199px;height:32px;overflow:hidden"><div class="t" style="left:15.5px;top:7.85px;font-size:14px;color:#1e1e1e;letter-spacing:-0.2px;">Свая_Винтовая_СВС_по_ТУ_</div>
</div>
<div class="a" style="left:1117px;top:684px;width:199px;height:32px;overflow:hidden"><div class="t" style="left:15.5px;top:7.85px;font-size:14px;color:#1e1e1e;letter-spacing:-0.2px;">Фундаментная плита:ADSK_</div>
</div>
<div class="a" style="left:562px;top:716px;width:762px;height:31px;background:#fff"></div>
<div class="a" style="left:562px;top:715.5px;width:762px;height:1px;background:#d6d6d6"></div>
<div class="a" style="left:626px;top:716px;width:1px;height:31px;background:#3a3a3a"></div>
<div class="a" style="left:716px;top:716px;width:1px;height:31px;background:#3a3a3a"></div>
<div class="a" style="left:916px;top:716px;width:1px;height:31px;background:#3a3a3a"></div>
<div class="a" style="left:1116px;top:716px;width:1px;height:31px;background:#3a3a3a"></div>
<div class="a" style="left:1316px;top:716px;width:1px;height:31px;background:#3a3a3a"></div>
<div class="a" style="left:583px;top:722.6px;width:14.5px;height:14.5px;border:1.6px solid #707070;border-radius:2px"></div>
<div class="t" style="left:643.5px;top:723.85px;font-size:14px;color:#1e1e1e;">новая</div>
<div class="t" style="left:732.8px;top:723.85px;font-size:14px;color:#1e1e1e;letter-spacing:-0.5px;">KP - KP</div>
<div class="a" style="left:917px;top:716px;width:199px;height:31px;overflow:hidden"><div class="t" style="left:15.5px;top:7.85px;font-size:14px;color:#1e1e1e;letter-spacing:-0.2px;">Свая_Винтовая_СВС_по_ТУ_</div>
</div>
<div class="a" style="left:1117px;top:716px;width:199px;height:31px;overflow:hidden"><div class="t" style="left:15.5px;top:7.85px;font-size:14px;color:#1e1e1e;letter-spacing:-0.2px;">Перекрытие:ADSK_земля:10</div>
</div>
<div class="a" style="left:916px;top:556px;width:201px;height:32px;border:1.5px solid #22dd22"></div>
<div class="a" style="left:1117px;top:556px;width:200px;height:32px;border:1.5px solid #eeee22"></div>
<!-- /TABLE -->
<!-- ARROW --><svg class="a" style="left:512px;top:31px;z-index:5" width="813" height="717" viewBox="512 31 813 717"><g filter="url(#sh2)" opacity="0.7" transform="translate(3 4)"><path d="M1103.3 395.6L926.5 320.5M1103.3 395.6L1037.4 529" stroke="#000" stroke-width="3.5" fill="none"/><path d="M911.7 314.2L929.6 313.3L923.2 327.5z M1030.3 543.3L1044.2 532.1L1030.6 525.6z" fill="#000"/></g><defs><filter id="sh2" x="-20%" y="-20%" width="140%" height="140%"><feGaussianBlur stdDeviation="2.2"/></filter></defs><path d="M1103.3 395.6L926.5 320.5M1103.3 395.6L1037.4 529" stroke="#c80c0c" stroke-width="3.2" fill="none" stroke-linecap="round"/><path d="M911.7 314.2L929.6 313.3L923.2 327.5z M1030.3 543.3L1044.2 532.1L1030.6 525.6z" fill="#c80c0c"/></svg>
<!-- PANEL -->
<div class="a panel"></div>
<svg class="a" style="left:64px;top:39px" width="448" height="60" viewBox="64 39 448 60">
<g fill="#e6e6e6"><rect x="75" y="59.8" width="13" height="1.9"/><rect x="75" y="64" width="13" height="1.9"/><rect x="75" y="68.2" width="10" height="1.9"/><path d="M86 69.5l4.4 2.4l-4.4 2.4z"/></g>
<rect x="219" y="83" width="106" height="2" fill="#e8e8e8"/>
<path d="M472.5 60.5l13 13M485.5 60.5l-13 13" stroke="#e6e6e6" stroke-width="2"/>
</svg>
<div class="t" style="left:121.4px;top:59.93px;font-size:14.5px;color:#a0a0a0;letter-spacing:1.25px;">Настройки</div>
<div class="t" style="left:235.8px;top:59.93px;font-size:14.5px;color:#efefef;letter-spacing:1.2px;">Коллизии</div>
<div class="t" style="left:342.4px;top:59.93px;font-size:14.5px;color:#a0a0a0;letter-spacing:1.2px;">Проверки</div>
<div class="sec" style="top:89px;height:294px;background:#676767"><div class="a" style="left:0;top:35px;width:428px;height:259px;background:#fff"></div></div>
<div class="t" style="left:79.3px;top:100.15px;font-size:14px;color:#e8e8e8;font-weight:700;-webkit-text-stroke:0;letter-spacing:-0.5px;">Дерево правил</div>
<svg class="a" style="left:476px;top:103px" width="12" height="7"><path d="M0.7 0.8h10.5l-5.25 5.2z" fill="#e8e8e8"/></svg>
<svg class="a" style="left:74px;top:133px" width="9" height="13"><path d="M1.3 3.6L4.1 0.9L6.9 3.6M1.3 8.2L4.1 10.9L6.9 8.2" stroke="#3d98bf" stroke-width="1.3" fill="none"/></svg>
<svg class="a" style="left:477px;top:135px" width="17" height="10" style="overflow:visible"><path d="M0.8 4.4l3.4 3.4M7.4 3.8l4-3.6M4.8 4.5l2.8 2.9l7.7-7.2" stroke="#3d98bf" stroke-width="1.3" fill="none"/></svg>
<div class="t" style="left:92.3px;top:134.53px;font-size:10px;color:#3d98bf;letter-spacing:0.85px;">Свернуть дерево</div>
<div class="t" style="left:396.5px;top:134.53px;font-size:10px;color:#3d98bf;letter-spacing:0.9px;">Выделить всё</div>
<div class="t" style="left:91.5px;top:153.84px;font-size:12px;color:#1e1e1e;font-weight:700;-webkit-text-stroke:0;letter-spacing:-0.35px;">Группа коллизий - 1</div>
<div class="t" style="right:852.7px;top:154.84px;font-size:12px;color:#3a7ce8;">57</div>
<div class="cbf" style="left:481px;top:155px"><div class="a" style="left:3px;top:5px;width:6px;height:2px;background:#fff"></div></div>
<div class="t" style="left:91.5px;top:177.84px;font-size:12px;color:#262626;">Правило 2.0</div>
<div class="t" style="right:852.7px;top:178.84px;font-size:12px;color:#3a7ce8;">0</div>
<div class="cb" style="left:481px;top:179px"></div>
<div class="t" style="left:91.5px;top:201.84px;font-size:12px;color:#262626;">Правило 3.0</div>
<div class="t" style="right:852.7px;top:202.84px;font-size:12px;color:#3a7ce8;">1</div>
<div class="cb" style="left:481px;top:203px"></div>
<div class="t" style="left:99px;top:225.84px;font-size:12px;color:#1e1e1e;font-weight:700;-webkit-text-stroke:0;letter-spacing:-0.35px;">AP-AP</div>
<div class="t" style="right:852.7px;top:226.84px;font-size:12px;color:#3a7ce8;">56</div>
<div class="cbf" style="left:481px;top:227px"><div class="a" style="left:3px;top:5px;width:6px;height:2px;background:#fff"></div></div>
<div class="t" style="left:99px;top:249.84px;font-size:12px;color:#262626;">Правило для AP</div>
<div class="t" style="right:852.7px;top:250.84px;font-size:12px;color:#3a7ce8;">56</div>
<div class="cbf" style="left:481px;top:251px"><svg class="a" style="left:0;top:0" width="12" height="12"><path d="M2.5 6l2.5 2.5l4.5-5" stroke="#fff" stroke-width="1.5" fill="none"/></svg></div>
<div class="t" style="left:99px;top:273.84px;font-size:12px;color:#262626;">Правило для AP_copy</div>
<div class="t" style="right:852.7px;top:274.84px;font-size:12px;color:#3a7ce8;">0</div>
<div class="cb" style="left:481px;top:275px"></div>
<svg class="a" style="left:0;top:0" width="100" height="240"><path d="M74 159.3h6.6l-3.3 3.6z M81.3 231.3h6.6l-3.3 3.6z" fill="#777"/></svg>
<div class="a" style="left:263px;top:385px;width:40px;height:2px;background:#3a9cc4"></div>
<div class="sec" style="top:390px;height:181.5px;background:#676767"><div class="a" style="left:0;top:70px;width:428px;height:112px;background:#fff"></div><div class="a" style="left:0;top:35px;width:428px;height:35px;background:#efefef"></div><div class="a" style="left:421px;top:94px;width:7px;height:87.5px;background:#f1f1f1"></div><div class="a" style="left:421px;top:94px;width:7px;height:79px;background:#c1c1c1"></div></div>
<div class="t" style="left:79.1px;top:400.55px;font-size:14px;color:#e8e8e8;font-weight:700;-webkit-text-stroke:0;letter-spacing:-0.4px;">Дерево коллизий</div>
<svg class="a" style="left:476px;top:404px" width="12" height="7"><path d="M0.7 0.8h10.5l-5.25 5.2z" fill="#e8e8e8"/></svg>
<div class="a" style="left:77px;top:450px;width:69px;height:2px;background:#aaaaaa"></div>
<div class="t" style="left:11.700000000000003px;width:200px;text-align:center;top:435.80px;font-size:12.4px;color:#2a2a2a;">IFC</div>
<div class="t" style="left:96px;width:200px;text-align:center;top:435.80px;font-size:12.4px;color:#2a2a2a;">Слои</div>
<div class="t" style="left:181.2px;width:200px;text-align:center;top:435.80px;font-size:12.4px;color:#2a2a2a;">Классы</div>
<div class="t" style="left:265.9px;width:200px;text-align:center;top:435.80px;font-size:12.4px;color:#2a2a2a;">Этажи</div>
<div class="t" style="left:352.9px;width:200px;text-align:center;top:435.80px;font-size:12.4px;color:#2a2a2a;">Группировки</div>
<svg class="a" style="left:74px;top:468px" width="9" height="13"><path d="M1.3 3.6L4.1 0.9L6.9 3.6M1.3 8.2L4.1 10.9L6.9 8.2" stroke="#3d98bf" stroke-width="1.3" fill="none"/></svg>
<svg class="a" style="left:477px;top:470px" width="17" height="10" style="overflow:visible"><path d="M0.8 4.4l3.4 3.4M7.4 3.8l4-3.6M4.8 4.5l2.8 2.9l7.7-7.2" stroke="#3d98bf" stroke-width="1.3" fill="none"/></svg>
<div class="t" style="left:92.2px;top:469.64px;font-size:10px;color:#3d98bf;letter-spacing:0.85px;">Свернуть дерево</div>
<div class="t" style="left:396.5px;top:469.64px;font-size:10px;color:#3d98bf;letter-spacing:0.9px;">Выделить всё</div>
<div class="a" style="left:69px;top:460px;width:421px;height:111.5px;overflow:hidden">
<div class="t" style="left:22.400000000000006px;top:29.29px;font-size:12.3px;color:#262626;">KP</div>
<div class="t" style="right:25.5px;top:30.29px;font-size:12.3px;color:#3a7ce8;">56/56</div>
<div class="a" style="left:402px;top:30px;width:12px;height:12px;border-radius:2px;background:#c4c4c4"><div class="a" style="left:2.5px;top:5px;width:7px;height:2px;background:#eee"></div></div>
<div class="t" style="left:30.200000000000003px;top:53.29px;font-size:12.3px;color:#262626;">1 этаж</div>
<div class="t" style="right:25.5px;top:54.29px;font-size:12.3px;color:#3a7ce8;">56/56</div>
<div class="a" style="left:402px;top:54px;width:12px;height:12px;border-radius:2px;background:#c4c4c4"><div class="a" style="left:2.5px;top:5px;width:7px;height:2px;background:#eee"></div></div>
<div class="t" style="left:30px;top:77.29px;font-size:12.3px;color:#262626;">Pile</div>
<div class="t" style="right:25.5px;top:78.29px;font-size:12.3px;color:#3a7ce8;">56/56</div>
<div class="a" style="left:402px;top:78px;width:12px;height:12px;border-radius:2px;background:#c4c4c4"><svg class="a" style="left:0;top:0" width="12" height="12"><path d="M2.5 6l2.5 2.5l4.5-5" stroke="#eee" stroke-width="1.4" fill="none"/></svg></div>
<div class="t" style="left:30px;top:101.29px;font-size:12.3px;color:#262626;">Slab</div>
<div class="t" style="right:25.5px;top:102.29px;font-size:12.3px;color:#3a7ce8;">56/56</div>
<div class="cb" style="left:402px;top:102px;border-color:#c8c8c8"></div>
<svg class="a" style="left:0;top:0" width="30" height="90"><path d="M5.3 35h6.6l-3.3 3.6z M13.3 59h6.6l-3.3 3.6z" fill="#777"/></svg>
</div>
<div class="a" style="left:506px;top:446px;width:1.5px;height:27px;background:#e8e8e8"></div>
<div class="a" style="left:263px;top:574.3px;width:40px;height:2px;background:#3a9cc4"></div>
<div class="sec" style="top:579.5px;height:169px;border-radius:3px 3px 0 0;background:#676767"><div class="a" style="left:0;top:67px;width:428px;height:102px;background:#fff"></div><div class="a" style="left:0;top:0;width:428px;height:34.5px;background:#676767"></div><div class="a" style="left:0;top:34.5px;width:428px;height:1px;background:#cfcfcf"></div><div class="a" style="left:0;top:35.5px;width:428px;height:31.5px;background:#646464"></div></div>
<div class="t" style="left:78.7px;top:589.55px;font-size:14px;color:#e8e8e8;font-weight:700;-webkit-text-stroke:0;letter-spacing:-0.37px;">Элемент "Свая_Винтовая_СВС_по_ТУ_25-11-23-001-469…</div>
<svg class="a" style="left:476px;top:593px" width="12" height="7"><path d="M0.7 0.8h10.5l-5.25 5.2z" fill="#e8e8e8"/></svg>
<div class="a" style="left:74px;top:637px;width:76px;height:2px;background:#bdbdbd"></div>
<div class="t" style="left:85px;top:623.71px;font-size:11.8px;color:#e0e0e0;font-weight:700;-webkit-text-stroke:0;letter-spacing:-0.3px;">Свойства</div>
<div class="t" style="left:167px;top:623.71px;font-size:11.8px;color:#e0e0e0;font-weight:700;-webkit-text-stroke:0;letter-spacing:-0.3px;">Геометрия</div>
<div class="t" style="left:271.5px;top:623.71px;font-size:11.8px;color:#e0e0e0;font-weight:700;-webkit-text-stroke:0;letter-spacing:-0.3px;">Код</div>
<div class="t" style="left:349px;top:623.71px;font-size:11.8px;color:#e0e0e0;font-weight:700;-webkit-text-stroke:0;letter-spacing:-0.3px;">Файлы</div>
<div class="t" style="left:427px;top:623.71px;font-size:11.8px;color:#e0e0e0;font-weight:700;-webkit-text-stroke:0;letter-spacing:-0.3px;">Коллизии</div>
<svg class="a" style="left:79px;top:654px" width="9" height="14"><path d="M1.5 4.5l3-3l3 3M1.5 9.5l3 3l3-3" stroke="#3d98bf" stroke-width="1.3" fill="none"/></svg>
<div class="t" style="left:97.7px;top:656.03px;font-size:10px;color:#3d98bf;letter-spacing:0.85px;">Развернуть дерево</div>
<div class="a" style="left:69px;top:673px;width:428px;height:1px;background:#d4d4d4"></div>
<div class="a" style="left:71px;top:674px;width:418px;height:24px;background:#f2f2f2"></div>
<div class="a" style="left:71px;top:722px;width:418px;height:24px;background:#f2f2f2"></div>
<div class="a" style="left:280px;top:674px;width:1px;height:74px;background:#cfcfcf"></div>
<div class="a" style="left:489px;top:674px;width:7.5px;height:66px;background:#c4c4c4"></div>
<div class="t" style="left:74.7px;top:680.34px;font-size:12px;color:#3a3a3a;">Название элемента</div>
<div class="t" style="left:289px;top:680.34px;font-size:12px;color:#2a2a2a;letter-spacing:-0.43px;">Свая_Винтовая_СВС_по_ТУ_25-1…</div>
<div class="t" style="left:74.7px;top:704.34px;font-size:12px;color:#3a3a3a;">IFC-тип</div>
<div class="t" style="left:289px;top:704.34px;font-size:12px;color:#2a2a2a;">IfcPile</div>
<div class="t" style="left:74.7px;top:728.34px;font-size:12px;color:#3a3a3a;">Идентификатор элемента IFC</div>
<div class="t" style="left:289px;top:728.34px;font-size:12px;color:#2a2a2a;letter-spacing:-0.29px;">1pDNIP7SL6deD_RinxWcwK</div>
</body></html>
